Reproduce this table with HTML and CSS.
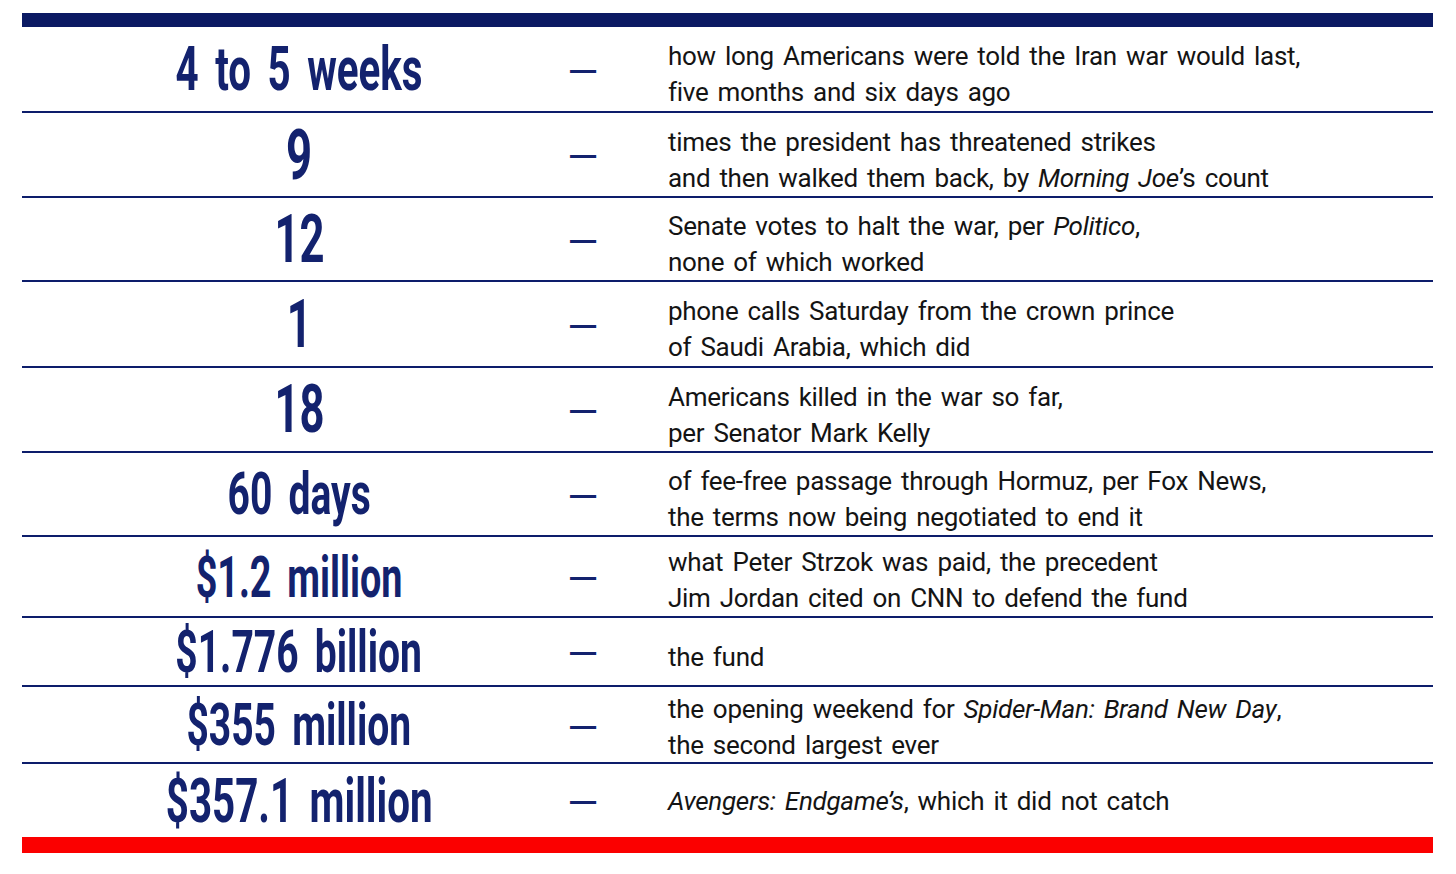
FILE: index.html
```html
<!DOCTYPE html>
<html lang="en">
<head>
<meta charset="utf-8">
<title>By the numbers</title>
<link rel="stylesheet" href="styles.css">
</head>
<body>
<div class="page">
  <div class="bar bar-top"></div>
  <div class="table">
    <div class="row r1">
      <div class="num n-l"><span>4 to 5 weeks</span></div>
      <div class="dash">–</div>
      <div class="desc">how long Americans were told the Iran war would last,<br>five months and six days ago</div>
    </div>
    <div class="row r2">
      <div class="num n-xxl"><span>9</span></div>
      <div class="dash">–</div>
      <div class="desc">times the president has threatened strikes<br>and then walked them back, by <em>Morning Joe</em>’s count</div>
    </div>
    <div class="row r3">
      <div class="num n-xl"><span>12</span></div>
      <div class="dash">–</div>
      <div class="desc">Senate votes to halt the war, per <em>Politico</em>,<br>none of which worked</div>
    </div>
    <div class="row r4">
      <div class="num n-xl"><span>1</span></div>
      <div class="dash">–</div>
      <div class="desc">phone calls Saturday from the crown prince<br>of Saudi Arabia, which did</div>
    </div>
    <div class="row r5">
      <div class="num n-xl"><span>18</span></div>
      <div class="dash">–</div>
      <div class="desc">Americans killed in the war so far,<br>per Senator Mark Kelly</div>
    </div>
    <div class="row r6">
      <div class="num n-m"><span>60 days</span></div>
      <div class="dash">–</div>
      <div class="desc">of fee-free passage through Hormuz, per Fox News,<br>the terms now being negotiated to end it</div>
    </div>
    <div class="row r7">
      <div class="num n-s"><span>$1.2 million</span></div>
      <div class="dash">–</div>
      <div class="desc">what Peter Strzok was paid, the precedent<br>Jim Jordan cited on CNN to defend the fund</div>
    </div>
    <div class="row r8">
      <div class="num n-m"><span>$1.776 billion</span></div>
      <div class="dash">–</div>
      <div class="desc">the fund</div>
    </div>
    <div class="row r9">
      <div class="num n-m"><span>$355 million</span></div>
      <div class="dash">–</div>
      <div class="desc">the opening weekend for <em>Spider-Man: Brand New Day</em>,<br>the second largest ever</div>
    </div>
    <div class="row r10">
      <div class="num n-l2"><span>$357.1 million</span></div>
      <div class="dash">–</div>
      <div class="desc"><em>Avengers: Endgame’s</em>, which it did not catch</div>
    </div>
  </div>
  <div class="bar bar-bottom"></div>
</div>
</body>
</html>
```

FILE: styles.css
```css
html, body {
  margin: 0;
  padding: 0;
  background: #ffffff;
}

.page {
  width: 1411px;
  padding: 13px 0 0 22px;
}

.bar {
  height: 14px;
}

.bar-top {
  background: #0b1a63;
}

.bar-bottom {
  height: 16px;
  background: #fb0000;
}

.table {
  display: grid;
  grid-template-rows: 86px 85px 84px 86px 85px 84px 81px 69px 77px 73px;
}

.row {
  display: grid;
  grid-template-columns: 548px 98px 1fr;
  align-items: center;
  border-bottom: 2px solid #0d1d6b;
  box-sizing: border-box;
}

.row.r10 {
  border-bottom: none;
}

.num {
  padding-left: 6px;
  text-align: center;
  font-family: Roboto, "Liberation Sans", sans-serif;
  font-weight: 700;
  color: #13226e;
  line-height: 1;
  white-space: nowrap;
}

.num span {
  display: inline-block;
  transform: scaleX(0.65);
  transform-origin: center;
  word-spacing: 10px;
}

.n-xxl { font-size: 70px; }
.n-xl { font-size: 67px; }
.n-l { font-size: 62px; }
.n-l2 { font-size: 62px; }
.n-m { font-size: 60px; }
.n-s { font-size: 58px; }

.dash {
  font-family: "Liberation Sans", Arial, sans-serif;
  font-size: 47px;
  line-height: 1;
  color: #13226e;
  margin-top: -6px;
}

.desc {
  font-family: Roboto, "Liberation Sans", sans-serif;
  font-size: 26px;
  line-height: 36px;
  color: #141414;
  letter-spacing: -0.3px;
  word-spacing: 3px;
  margin-top: 10px;
}

.r7 .desc {
  margin-top: 6px;
}

.r9 .desc {
  margin-top: 4px;
}

.r10 .desc {
  margin-top: 0;
}

.desc em {
  font-style: italic;
}
```
